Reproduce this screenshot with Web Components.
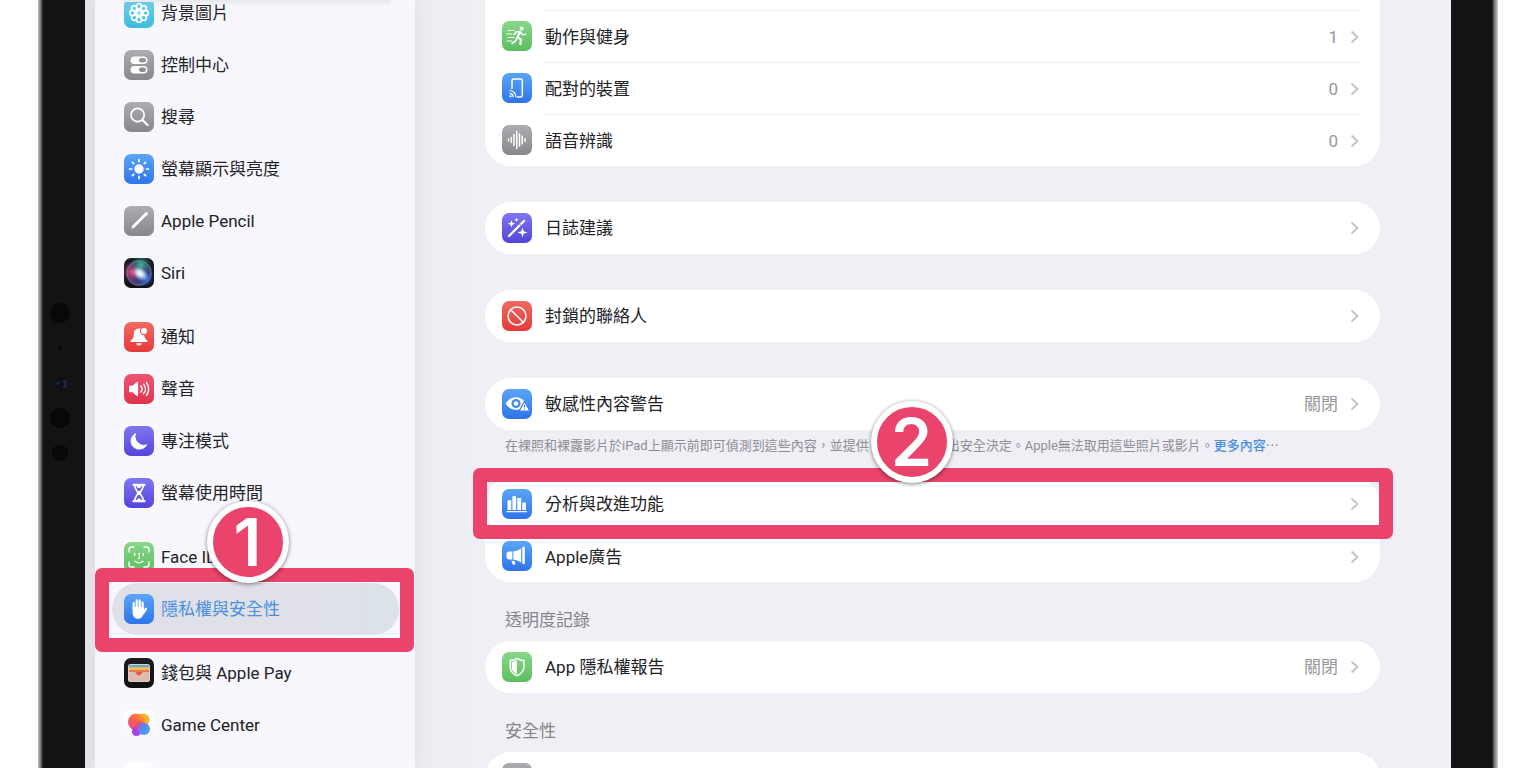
<!DOCTYPE html>
<html lang="zh-Hant">
<head>
<meta charset="utf-8">
<title>隱私權與安全性</title>
<style>
  html, body {
    height: 100%;
    margin: 0;
  }
  body {
    background: #fff;
    color: #222226;
    font: 17px/24px Roboto, "Noto Sans CJK TC", sans-serif;
    overflow: hidden;
  }
</style>
</head>
<body>

<tablet-frame>
  <settings-sidebar slot="sidebar">
    <nav-group>
      <nav-item icon="wallpaper" tint="cyan">背景圖片</nav-item>
      <nav-item icon="toggles" tint="gray">控制中心</nav-item>
      <nav-item icon="search" tint="gray">搜尋</nav-item>
      <nav-item icon="sun" tint="blue">螢幕顯示與亮度</nav-item>
      <nav-item icon="pencil" tint="gray">Apple Pencil</nav-item>
      <nav-item icon="siri" tint="black">Siri</nav-item>
    </nav-group>
    <nav-group>
      <nav-item icon="bell" tint="red">通知</nav-item>
      <nav-item icon="speaker" tint="pink">聲音</nav-item>
      <nav-item icon="moon" tint="purple">專注模式</nav-item>
      <nav-item icon="hourglass" tint="purple">螢幕使用時間</nav-item>
    </nav-group>
    <nav-group>
      <nav-item icon="face" tint="green">Face ID</nav-item>
      <nav-item icon="hand" tint="blue" selected>隱私權與安全性
        <step-marker slot="marker" step="1"></step-marker>
      </nav-item>
    </nav-group>
    <nav-group>
      <nav-item icon="wallet" tint="black">錢包與 Apple Pay</nav-item>
      <nav-item icon="game" tint="white">Game Center</nav-item>
      <nav-item icon="none" tint="white"></nav-item>
    </nav-group>
  </settings-sidebar>

  <settings-card cut>
    <settings-row icon="run" tint="green" value="1">動作與健身</settings-row>
    <settings-row icon="device" tint="blue" value="0">配對的裝置</settings-row>
    <settings-row icon="wave" tint="gray" value="0">語音辨識</settings-row>
  </settings-card>
  <settings-card>
    <settings-row icon="wand" tint="purple">日誌建議</settings-row>
  </settings-card>
  <settings-card>
    <settings-row icon="block" tint="red">封鎖的聯絡人</settings-row>
  </settings-card>
  <settings-card>
    <settings-row icon="eye" tint="blue" value="關閉">敏感性內容警告</settings-row>
    <span slot="note">在裸照和裸露影片於iPad上顯示前即可偵測到這些內容，並提供</span>
    <span slot="note-end">出安全決定。Apple無法取用這些照片或影片。<more-link>更多內容</more-link></span>
  </settings-card>
  <settings-card>
    <settings-row icon="chart" tint="blue">分析與改進功能
      <step-marker slot="marker" step="2"></step-marker>
    </settings-row>
    <settings-row icon="horn" tint="blue">Apple廣告</settings-row>
  </settings-card>
  <settings-card heading="透明度記錄">
    <settings-row icon="shield" tint="green" value="關閉">App 隱私權報告</settings-row>
  </settings-card>
  <settings-card heading="安全性">
    <settings-row icon="none" tint="gray"></settings-row>
  </settings-card>
</tablet-frame>

<script>
const TINTS = {
  cyan: '#74d3ee, #3dbbdd',
  gray: '#acacb1, #87878c',
  blue: '#5aa5f6, #2f74ea',
  red: '#f26a62, #e43a3b',
  pink: '#ef5470, #df344e',
  purple: '#7f77f0, #5444dc',
  green: '#88d78a, #5cbe60',
  black: '#1d1d1f, #111113',
  white: '#ffffff, #f6f6f9'
}

// every glyph is drawn on a 30x30 tile
const GLYPHS = {
  none: '',
  wallpaper: `
    <g fill="none" stroke="#fff" stroke-width="1.7">
      <circle cx="15" cy="8.4" r="2.7"/><circle cx="19.7" cy="10.3" r="2.7"/>
      <circle cx="21.6" cy="15" r="2.7"/><circle cx="19.7" cy="19.7" r="2.7"/>
      <circle cx="15" cy="21.6" r="2.7"/><circle cx="10.3" cy="19.7" r="2.7"/>
      <circle cx="8.4" cy="15" r="2.7"/><circle cx="10.3" cy="10.3" r="2.7"/>
    </g>
    <circle cx="15" cy="15" r="4" fill="#fff" opacity=".85"/>
    <circle cx="15" cy="15" r="1.3" fill="#6ccde8"/>`,
  toggles: `
    <rect x="6.5" y="6.5" width="17" height="7.6" rx="3.8" fill="#fff"/>
    <rect x="15" y="8" width="7" height="4.6" rx="2.3" fill="#929297"/>
    <rect x="6.5" y="15.9" width="17" height="7.6" rx="3.8" fill="#fff"/>
    <rect x="15" y="17.4" width="7" height="4.6" rx="2.3" fill="#8c8c91"/>`,
  search: `
    <g fill="none" stroke="#fff" stroke-width="1.7" stroke-linecap="round">
      <circle cx="13.6" cy="13" r="6.6"/><path d="M18.5 18l5 5" stroke-width="2.2"/>
    </g>`,
  sun: `
    <circle cx="15" cy="15" r="4.7" fill="#fff"/>
    <path d="M15 5.6v2M15 22.4v2M5.6 15h2M22.4 15h2M8.4 8.4l1.3 1.3M20.3 20.3l1.3 1.3M21.6 8.4l-1.3 1.3M9.7 20.3l-1.3 1.3" stroke="#fff" stroke-width="1.7" stroke-linecap="round"/>`,
  pencil: `
    <path d="M7.2 22.8l1-3L20.4 7.6l2 2L10.2 21.8z" fill="#fff"/>
    <circle cx="22.3" cy="7.7" r="1.7" fill="#fff"/>`,
  siri: `
    <defs>
      <radialGradient id="core"><stop offset="0" stop-color="#fff"/><stop offset=".4" stop-color="#dff4ff" stop-opacity=".85"/><stop offset="1" stop-color="#9bd" stop-opacity="0"/></radialGradient>
      <radialGradient id="left"><stop offset="0" stop-color="#f04a86"/><stop offset="1" stop-color="#a01f5b" stop-opacity="0"/></radialGradient>
      <radialGradient id="top"><stop offset="0" stop-color="#3dbb9c"/><stop offset="1" stop-color="#1f6d68" stop-opacity="0"/></radialGradient>
      <radialGradient id="low"><stop offset="0" stop-color="#4594f5"/><stop offset="1" stop-color="#1b2d8c" stop-opacity="0"/></radialGradient>
    </defs>
    <circle cx="15" cy="15" r="13" fill="#433f72"/>
    <circle cx="8" cy="14" r="11" fill="url(#left)"/>
    <circle cx="17" cy="7" r="11" fill="url(#top)"/>
    <circle cx="21" cy="20" r="10" fill="url(#low)"/>
    <ellipse cx="16" cy="15.5" rx="9" ry="6.5" transform="rotate(35 16 15.5)" fill="url(#core)"/>
    <circle cx="15" cy="15" r="12" fill="none" stroke="#79a6b8" stroke-width=".8" opacity=".6"/>`,
  bell: `
    <path d="M15 6.5c-3.6 0-5 2.6-5.2 5.6-.2 3.6-.8 4.7-3 6.3-.6.5-.4 1.5.5 1.5h15.4c.9 0 1.1-1 .5-1.5-2.2-1.6-2.8-2.7-3-6.3-.2-3-1.6-5.6-5.2-5.6z" fill="#fff"/>
    <path d="M12.4 21.3h5.2a2.6 2.3 0 0 1-5.2 0z" fill="#fff"/>
    <circle cx="20" cy="9" r="4.2" fill="#f0605a"/><circle cx="20" cy="9" r="3" fill="#fff"/>`,
  speaker: `
    <path d="M5 12.8c0-.6.4-1 1-1h2.5l4.3-3.7c.5-.5 1.3-.2 1.3.6v12.6c0 .8-.8 1.1-1.3.6l-4.3-3.7H6c-.6 0-1-.4-1-1z" fill="#fff"/>
    <path d="M16.8 12a4.5 4.5 0 0 1 0 6M19.6 10.2a7.5 7.5 0 0 1 0 9.6M22.4 8.5a10.5 10.5 0 0 1 0 13" fill="none" stroke="#fff" stroke-width="1.4" stroke-linecap="round"/>`,
  moon: `<path d="M12.5 6.8a8.6 8.6 0 1 0 10.8 11.2A8.2 8.2 0 0 1 12.5 6.8z" fill="#fff"/>`,
  hourglass: `
    <g fill="none" stroke="#fff" stroke-width="1.7" stroke-linejoin="round" stroke-linecap="round">
      <path d="M9.5 6.8h11M9.5 23.2h11" stroke-width="2.2"/>
      <path d="M10.8 7.5c0 4 3 5 3 7.5s-3 3.5-3 7.5M19.2 7.5c0 4-3 5-3 7.5s3 3.5 3 7.5"/>
    </g>
    <path d="M11.5 7h7l-2.5 3h-2zM13.5 13h3v4h-3zM11.8 22.5l3.2-2.5 3.2 2.5z" fill="#fff"/>`,
  face: `
    <g fill="none" stroke="#fff" stroke-width="1.4" stroke-linecap="round">
      <path d="M5 10V7.5A2.5 2.5 0 0 1 7.5 5H10M20 5h2.5A2.5 2.5 0 0 1 25 7.5V10M25 20v2.5a2.5 2.5 0 0 1-2.5 2.5H20M10 25H7.5A2.5 2.5 0 0 1 5 22.5V20"/>
      <path d="M10.7 11.5v1.8M19.3 11.5v1.8M15.3 11.5v4.2c0 .6-.4.9-1 .9M11 19.3c2.2 2 5.8 2 8 0"/>
    </g>`,
  hand: `
    <g stroke="#fff" stroke-width="2.2" stroke-linecap="round" fill="none">
      <path d="M9.7 15V9.2M12.7 14V6.4M15.7 14V6.4M18.6 15V8.6M19.5 19l2.6-4.4"/>
    </g>
    <path d="M8.6 13h11.1l1.2 4-1.3 3c-1 3-2.9 4.8-5.6 4.8-3.5 0-5.4-2.6-5.4-6.8z" fill="#fff"/>`,
  wallet: `
    <rect x="4" y="6" width="22" height="18" rx="2.5" fill="#ddd2c7"/>
    <path d="M5 9.5V8.3c0-.8.6-1.3 1.3-1.3h17.4c.7 0 1.3.5 1.3 1.3v1.2z" fill="#68a9bd"/>
    <path d="M5 9.5h20V12H5z" fill="#eebb54"/>
    <path d="M5 12h20v2.8H5z" fill="#e77955"/>
    <path d="M5 14h5.5c1.6 0 1.8 2.7 4.5 2.7s2.9-2.7 4.5-2.7H25v7.500c0 .8-.6 1.500-1.300 1.500H6.300c-.7 0-1.300-.7-1.300-1.500z" fill="#dfbaae"/>
    <path d="M11 14h8c-1.2.6-1.6 3.4-4 3.4S12.2 14.6 11 14z" fill="#dc604f"/>`,
  game: `
    <defs>
      <linearGradient id="warm" x1="1" y1="0" x2="0" y2="1"><stop offset="0" stop-color="#fbae2f"/><stop offset=".5" stop-color="#f55a48"/><stop offset="1" stop-color="#ee3b8f"/></linearGradient>
      <linearGradient id="cool" x1="0" y1="0" x2="1" y2="1"><stop offset="0" stop-color="#6a78f4"/><stop offset="1" stop-color="#2ca0f4"/></linearGradient>
    </defs>
    <circle cx="19" cy="10" r="6.5" fill="#fbb02c"/>
    <circle cx="12.5" cy="12" r="8.5" fill="url(#warm)" opacity=".95"/>
    <circle cx="12.5" cy="21.5" r="4.5" fill="#a43ff4"/>
    <circle cx="16.5" cy="17.5" r="5.5" fill="#d8489c" opacity=".85"/>
    <circle cx="20" cy="19" r="6" fill="url(#cool)" opacity=".93"/>`,
  run: `
    <circle cx="19.8" cy="7.5" r="2" fill="#fff"/>
    <g fill="none" stroke="#fff" stroke-linecap="round" stroke-linejoin="round">
      <path d="M18 10.7l-2.6 5.5 3.6 2.5-.6 4.5" stroke-width="2.2"/>
      <path d="M12.3 13.3l2-2.6 3.7 0 2.5 3 3-.5M15 17l-1.5 3-3.5 2.5" stroke-width="1.6"/>
      <path d="M6 9.5h6M5 13h5M6 16.5h6M5 20h5" stroke-width="1.2"/>
    </g>`,
  device: `
    <g fill="none" stroke="#fff" stroke-width="1.5" stroke-linecap="round">
      <path d="M10 15.5V7.7c0-1 .7-1.7 1.7-1.7h6.9c1 0 1.7.7 1.7 1.7v14.6c0 1-.7 1.7-1.7 1.7H15.5"/>
      <path d="M8 17.5a6.5 6.5 0 0 1 6 6.3M8 20.3a3.7 3.7 0 0 1 3.3 3.5" stroke-width="1.2"/>
    </g>
    <circle cx="8.5" cy="23.3" r="1.1" fill="#fff"/>`,
  wave: `<path d="M6.5 14v2M9.3 12.5v5M12 9.5v11M14.8 6.5v17M17.5 9v12M20.2 11v8M23 13.8v2.4" stroke="#fff" stroke-width="1.5" stroke-linecap="round"/>`,
  wand: `
    <path d="M7 23L22 8" stroke="#fff" stroke-width="2.3" stroke-linecap="round"/>
    <path d="M17.3 10.8l1.9 1.9" stroke="#6559e6" stroke-width="1"/>
    <path d="M20.5 14.5l1.2 3.8 3.8 1.2-3.8 1.2-1.2 3.8-1.2-3.8-3.8-1.2 3.8-1.2zM9.5 7l1 2.8 2.8 1-2.8 1-1 2.8-1-2.8-2.8-1 2.8-1zM14.5 4.5l.6 1.7 1.7.6-1.7.6-.6 1.7-.6-1.7-1.7-.6 1.7-.6z" fill="#fff"/>`,
  block: `
    <g fill="none" stroke="#fff" stroke-width="1.5">
      <circle cx="15" cy="15" r="9"/><path d="M8.7 8.7l12.6 12.6"/>
    </g>`,
  eye: `
    <path d="M3.5 14.5C6 10.5 10 8.2 14 8.2s8 2.3 10.5 6.3c-2.5 4-6.5 6.3-10.5 6.3s-8-2.3-10.5-6.3z" fill="#fff"/>
    <circle cx="14" cy="14.5" r="4.6" fill="#438bef"/><circle cx="14" cy="14.5" r="2.3" fill="#fff"/>
    <path d="M22.5 12.3l5.3 9.7H17.2z" fill="#fff" stroke="#3d82ed" stroke-width="1.2" stroke-linejoin="round"/>
    <path d="M22.5 15.8v2.7M22.5 19.6v1" stroke="#3d82ed" stroke-width="1.1"/>`,
  chart: `<path d="M5.5 11.3h3.8V21H5.5zM10.4 7.3h3.8V21h-3.8zM15.3 9h3.8v12h-3.8zM20.2 13.5H24V21h-3.8zM4.5 22H25v1.3H4.5z" fill="#fff"/>`,
  horn: `
    <path d="M4.5 13.2c0-1.6 1-2.7 2.5-2.7h3.4v8H7c-1.5 0-2.5-1.1-2.5-2.7zM11.4 10.3c3-.2 5.5-1.3 7.8-3v14.4c-2.3-1.7-4.8-2.8-7.8-3z" fill="#fff"/>
    <rect x="20.3" y="5.6" width="2.5" height="17.6" rx="1.2" fill="#fff"/>
    <path d="M9.3 19.7l3.5.3.6 2.2c.3 1.4-2.3 2.2-2.9.7z" fill="#fff"/>`,
  shield: `
    <path d="M15 6.3c2.2 1.5 4.3 2.1 6.8 2.2v6.7c0 4-2.7 6.6-6.8 8.5-4.1-1.9-6.8-4.5-6.8-8.5V8.5c2.5-.1 4.6-.7 6.8-2.2z" fill="none" stroke="#fff" stroke-width="1.5"/>
    <path d="M15 8v14c-3.3-1.7-5.3-3.6-5.3-6.8V9.9C11.6 9.7 13.3 9.1 15 8z" fill="#fff"/>`
}

function shadow (host, html) {
  host.attachShadow({ mode: 'open' }).innerHTML = html
}

customElements.define(
  'app-icon',
  class AppIcon extends HTMLElement {
    connectedCallback () {
      shadow(this, `
        <style>
          :host {
            display: block;
            flex: none;
            width: 30px;
            height: 30px;
            border-radius: 7px;
            overflow: hidden;
            background: linear-gradient(${TINTS[this.getAttribute('tint')]});
          }
          svg {
            display: block;
          }
        </style>
        <svg width="30" height="30" viewBox="0 0 30 30" aria-hidden="true">${GLYPHS[this.getAttribute('name')]}</svg>
      `)
    }
  }
)

customElements.define(
  'step-marker',
  class StepMarker extends HTMLElement {
    connectedCallback () {
      shadow(this, `
        <style>
          :host {
            position: absolute;
            z-index: 2;
            inset: var(--marker-inset, -14px);
            border: 14px solid #ea436c;
            border-radius: 7px;
            pointer-events: none;
          }
          b {
            position: absolute;
            left: 47.6%;
            top: -81px;
            box-sizing: border-box;
            width: 82px;
            height: 82px;
            margin-left: -41px;
            border: 6px solid #fff;
            border-radius: 50%;
            background: #ea436c;
            box-shadow: 0 1px 4px rgba(0, 0, 0, .5);
            color: #fff;
            font: 600 66px/70px Inter, sans-serif;
            text-align: center;
          }
        </style>
        <b>${this.getAttribute('step')}</b>
      `)
    }
  }
)

customElements.define(
  'nav-item',
  class NavItem extends HTMLElement {
    connectedCallback () {
      shadow(this, `
        <style>
          :host {
            display: block;
            position: relative;
            --marker-inset: -15px -15px -17px -17px;
          }
          a {
            display: flex;
            align-items: center;
            gap: 7px;
            height: 52px;
            padding: 0 12px;
            border-radius: 26px;
            color: inherit;
            text-decoration: none;
            white-space: nowrap;
          }
          :host([selected]) a {
            background: linear-gradient(to right, #e0e1e8 70%, #dae2ea);
            color: #4a8fe0;
          }
        </style>
        <a href="#"><app-icon name="${this.getAttribute('icon')}" tint="${this.getAttribute('tint')}"></app-icon><span><slot></slot></span></a>
        <slot name="marker"></slot>
      `)
    }
  }
)

customElements.define(
  'nav-group',
  class NavGroup extends HTMLElement {
    connectedCallback () {
      shadow(this, `
        <style>
          :host {
            display: block;
          }
        </style>
        <slot></slot>
      `)
    }
  }
)

customElements.define(
  'settings-sidebar',
  class SettingsSidebar extends HTMLElement {
    connectedCallback () {
      shadow(this, `
        <style>
          :host {
            display: block;
            position: relative;
            flex: none;
            box-sizing: border-box;
            width: 320px;
            margin-left: 10px;
            padding: 0 16px 0 17px;
            background: #f7f7fd;
            box-shadow: 0 0 14px rgba(60, 60, 80, .08);
          }
          /* the list is scrolled under the search field */
          nav {
            display: flex;
            flex-direction: column;
            gap: 12px;
            margin-top: -13px;
          }
          .search {
            position: absolute;
            z-index: 1;
            top: 0;
            left: 28px;
            right: 24px;
            height: 2px;
            border-radius: 0 0 20px 20px;
            background: #e9eaed;
            box-shadow: 0 1px 4px rgba(90, 90, 110, .15);
          }
        </style>
        <div class="search"></div>
        <nav><slot></slot></nav>
      `)
    }
  }
)

customElements.define(
  'settings-row',
  class SettingsRow extends HTMLElement {
    connectedCallback () {
      const value = this.getAttribute('value')
      shadow(this, `
        <style>
          :host {
            display: block;
            position: relative;
            --marker-inset: -10px -13px -9px -12px;
          }
          a {
            display: flex;
            align-items: center;
            height: 52px;
            padding-left: 17px;
            color: inherit;
            text-decoration: none;
          }
          .body {
            flex: 1;
            display: flex;
            align-items: center;
            box-sizing: border-box;
            height: 100%;
            margin: 0 19px 0 13px;
            border-top: var(--row-line, 1px solid #ececee);
          }
          .label {
            flex: 1;
          }
          .value {
            margin-right: 11px;
            color: #98989c;
          }
        </style>
        <a href="#">
          <app-icon name="${this.getAttribute('icon')}" tint="${this.getAttribute('tint')}"></app-icon>
          <span class="body">
            <span class="label"><slot></slot></span>
            ${value ? `<span class="value">${value}</span>` : ''}
            <svg width="12" height="14" viewBox="0 0 12 14" aria-hidden="true"><path d="M3 2l5.500 5L3 12" fill="none" stroke="#c2c2c6" stroke-width="1.7" stroke-linecap="round" stroke-linejoin="round"/></svg>
          </span>
        </a>
        <slot name="marker"></slot>
      `)
    }
  }
)

customElements.define(
  'more-link',
  class MoreLink extends HTMLElement {
    connectedCallback () {
      // no white space round the link: it runs on in the sentence
      shadow(this, `<style>
          :host {
            display: inline;
          }
          a {
            color: #4b8fe0;
            font-weight: 500;
            text-decoration: none;
          }
        </style><a href="#"><slot></slot></a>⋯`)
    }
  }
)

customElements.define(
  'settings-card',
  class SettingsCard extends HTMLElement {
    connectedCallback () {
      const heading = this.getAttribute('heading')
      const note = this.querySelector('[slot="note"]')
      shadow(this, `
        <style>
          :host {
            display: block;
          }
          h2 {
            margin: 0;
            padding: 26px 20px 9px;
            color: #85858a;
            font: inherit;
          }
          .rows {
            border-radius: 26px;
            background: #fff;
          }
          :host([cut]) .rows {
            padding-top: 10px;
            border-radius: 0 0 26px 26px;
          }
          :host(:not([cut])) ::slotted(settings-row:first-child) {
            --row-line: 0;
          }
          /* the gap leaves room for the step badge */
          .note {
            display: flex;
            gap: 78px;
            height: 48px;
            box-sizing: border-box;
            margin: 0;
            padding: 6px 20px 0;
            color: #8e8e94;
            font-size: 13px;
            line-height: 20px;
            white-space: nowrap;
          }
        </style>
        ${heading ? `<h2>${heading}</h2>` : ''}
        <div class="rows"><slot></slot></div>
        ${note ? '<p class="note"><slot name="note"></slot><slot name="note-end"></slot></p>' : ''}
      `)
    }
  }
)

customElements.define(
  'tablet-frame',
  class TabletFrame extends HTMLElement {
    connectedCallback () {
      shadow(this, `
        <style>
          :host {
            display: flex;
            height: 100vh;
            margin: 0 38px;
            overflow: hidden;
          }
          .bezel {
            flex: none;
            display: flex;
            align-items: center;
            width: 47px;
            background: linear-gradient(to right, #c4c4c4, #6a6a6a 3px, #131313 5px);
          }
          .bezel.right {
            background: linear-gradient(to left, #d0d0d0, #6a6a6a 4px, #131313 6px);
          }
          .screen {
            flex: 1;
            display: flex;
            min-width: 0;
            background: linear-gradient(to right, #e3e2e9, #e8e8ee 10px, #ececf1 335px, #f0eff5 400px);
          }
          main {
            flex: 1;
            display: flex;
            flex-direction: column;
            min-width: 0;
            padding: 0 71px 0 70px;
          }
          ::slotted(settings-card:not([cut]):not([heading])) {
            margin-top: var(--card-gap, 36px);
          }
        </style>
        <div class="bezel">
          <svg width="47" height="170" viewBox="0 0 47 170" aria-hidden="true">
            <g fill="#080808">
              <circle cx="22" cy="14" r="10"/><circle cx="22" cy="49" r="2"/>
              <circle cx="22" cy="119" r="10"/><circle cx="22" cy="154" r="8"/>
            </g>
            <circle cx="23" cy="85" r="6" fill="#0e1017"/>
            <circle cx="20" cy="84" r="2" fill="#14243c"/><path d="M25 82a3 3 0 0 1 0 6" stroke="#182d4c" stroke-width="2" fill="none"/>
          </svg>
        </div>
        <div class="screen">
          <slot name="sidebar"></slot>
          <main><slot></slot></main>
        </div>
        <div class="bezel right"></div>
      `)
      // a card that follows a footnote sits right below it
      for (const note of this.querySelectorAll('[slot="note"]')) {
        note.parentElement.nextElementSibling.style.setProperty('--card-gap', '0px')
      }
    }
  }
)
</script>
</body>
</html>
